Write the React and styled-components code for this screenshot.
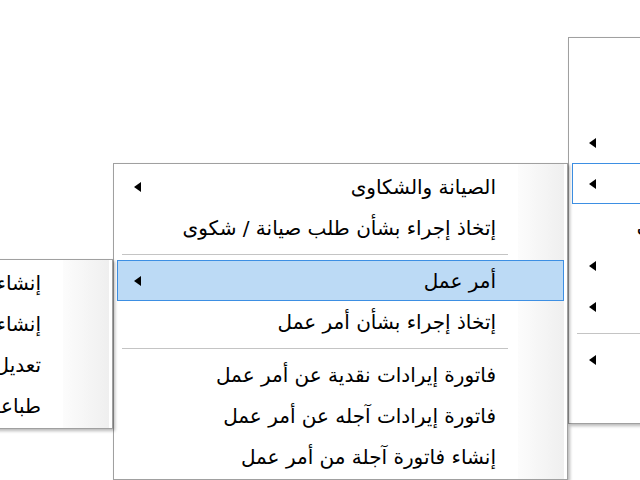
import React from "react";
import styled, { createGlobalStyle } from "styled-components";

const Global = createGlobalStyle`
  html, body { margin: 0; padding: 0; background: #fff; }
  #root { width: 640px; height: 480px; }
`;

const Canvas = styled.div`
  position: relative;
  width: 640px;
  height: 480px;
  overflow: hidden;
  background: #fff;
  font-family: "DejaVu Sans", "Noto Sans", sans-serif;
`;

const Menu = styled.div`
  position: absolute;
  left: ${(p) => p.$left}px;
  top: ${(p) => p.$top}px;
  width: ${(p) => p.$width}px;
  box-sizing: border-box;
  direction: rtl;
  display: flex;
  flex-direction: column;
  padding: 2px 3px;
  border: 1px solid #a0a0a0;
  background: linear-gradient(to right, #fcfcfc, #efefef) no-repeat right 3px top 0 / 46px 100%, #fff;
  box-shadow: 2px 2px 3px rgba(0, 0, 0, 0.28);
`;

const Item = styled.div`
  display: flex;
  align-items: center;
  height: 41px;
  flex: none;
  box-sizing: border-box;
  padding: 0 67px 0 16px;
  border: 1px solid ${(p) => (p.$active || p.$focus ? "#3d8fe3" : "transparent")};
  background: ${(p) => (p.$active ? "#bcdaf5" : "transparent")};
  font-size: 20px;
  color: #000;
  white-space: nowrap;
`;

const Label = styled.span`
  line-height: 1;
`;

const Arrow = styled.span`
  margin-right: auto;
  width: 0;
  height: 0;
  border-top: 5.5px solid transparent;
  border-bottom: 5.5px solid transparent;
  border-right: 7px solid #000;
`;

const Separator = styled.div`
  height: 12px;
  flex: none;
  display: flex;
  align-items: center;
  margin: 0 56px 0 5px;
  &::after {
    content: "";
    flex: 1;
    height: 1px;
    background: #c4c4c4;
  }
`;

const MenuItem = ({ label, sub, active, focus }) => (
  <Item $active={active} $focus={focus}>
    <Label>{label}</Label>
    {sub && <Arrow />}
  </Item>
);

const renderEntries = (entries) =>
  entries.map((e, i) =>
    e === "-" ? <Separator key={i} /> : <MenuItem key={i} {...e} />
  );

const menuA = [
  { label: "الحسابات" },
  { label: "المخازن" },
  { label: "المبيعات", sub: true },
  { label: "الصيانة", sub: true, focus: true },
  { label: "إتخاذ إجراء بشأن أمر عمل" },
  { label: "المشتريات", sub: true },
  { label: "التقارير", sub: true },
  "-",
  { label: "الإعدادات", sub: true },
  { label: "خروج" },
];

const menuB = [
  { label: "الصيانة والشكاوى", sub: true },
  { label: "إتخاذ إجراء بشأن طلب صيانة / شكوى" },
  "-",
  { label: "أمر عمل", sub: true, active: true },
  { label: "إتخاذ إجراء بشأن أمر عمل" },
  "-",
  { label: "فاتورة إيرادات نقدية عن أمر عمل" },
  { label: "فاتورة إيرادات آجله عن أمر عمل" },
  { label: "إنشاء فاتورة آجلة من أمر عمل" },
];

const menuC = [
  { label: "إنشاء أمر عمل جديد" },
  { label: "إنشاء أمر عمل داخلي" },
  { label: "تعديل أمر عمل" },
  { label: "طباعة أمر عمل" },
];

export default function App() {
  return (
    <Canvas>
      <Global />
      <Menu $left={568} $top={37} $width={359}>
        {renderEntries(menuA)}
      </Menu>
      <Menu $left={113} $top={163} $width={455}>
        {renderEntries(menuB)}
      </Menu>
      <Menu $left={-200} $top={259} $width={313}>
        {renderEntries(menuC)}
      </Menu>
    </Canvas>
  );
}
